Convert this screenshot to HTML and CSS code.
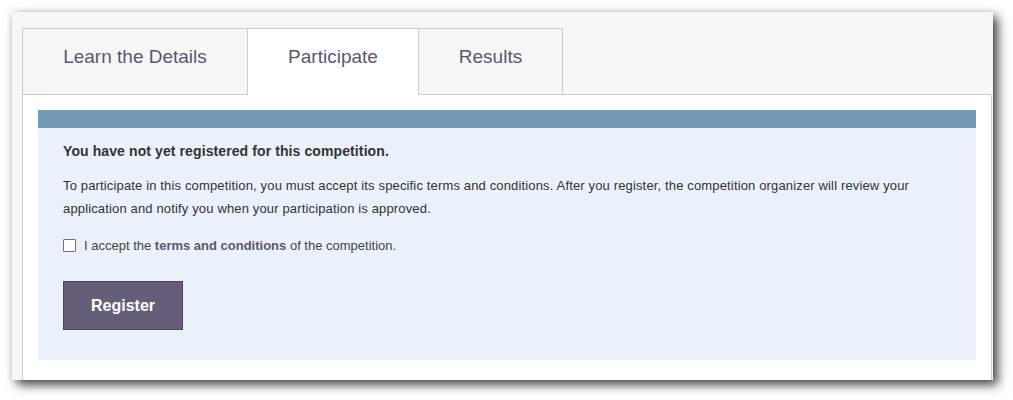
FILE: index.html
```html
<!DOCTYPE html>
<html lang="en">
<head>
<meta charset="utf-8">
<title>Participate</title>
<link rel="stylesheet" href="styles.css">
</head>
<body>
<div class="card">
  <div class="tabs">
    <div class="tab tab-details">Learn the Details</div>
    <div class="tab tab-active">Participate</div>
    <div class="tab tab-results">Results</div>
    <div class="tab-filler"></div>
  </div>
  <div class="panel">
    <div class="notice">
      <h2 class="notice-title">You have not yet registered for this competition.</h2>
      <p class="notice-text">To participate in this competition, you must accept its specific terms and conditions. After you register, the competition organizer will review your application and notify you when your participation is approved.</p>
      <label class="accept">
        <input type="checkbox" class="accept-box">
        <span>I accept the <a class="terms-link">terms and conditions</a> of the competition.</span>
      </label>
      <button class="register-btn" type="button">Register</button>
    </div>
  </div>
</div>
</body>
</html>
```
FILE: styles.css
```css
html, body {
  margin: 0;
  padding: 0;
  background: #ffffff;
}
body {
  font-family: "Liberation Sans", Arial, sans-serif;
  color: #333333;
  padding-bottom: 20px;
}
.card {
  margin: 12px 0 0 12px;
  width: 981px;
  height: 368px;
  box-sizing: border-box;
  padding: 16px 1px 0 10px;
  background: #f6f6f6;
  box-shadow: 5px 5px 10px rgba(0, 0, 0, 0.7), 0 0 8px rgba(0, 0, 0, 0.12);
  display: flex;
  flex-direction: column;
}
.tabs {
  display: flex;
  height: 67px;
  flex: none;
}
.tab {
  box-sizing: border-box;
  height: 67px;
  display: flex;
  align-items: center;
  justify-content: center;
  font-size: 19px;
  color: #5d566f;
  border-top: 1px solid #cccccc;
  border-bottom: 1px solid #cccccc;
  padding-bottom: 10px;
}
.tab-details {
  width: 226px;
  border-left: 1px solid #cccccc;
  border-right: 1px solid #cccccc;
}
.tab-active {
  width: 170px;
  background: #ffffff;
  border-bottom-color: #ffffff;
}
.tab-results {
  width: 145px;
  border-left: 1px solid #cccccc;
  border-right: 1px solid #cccccc;
}
.tab-filler {
  flex: 1;
  border-bottom: 1px solid #cccccc;
}
.panel {
  flex: 1;
  background: #ffffff;
  border-left: 1px solid #cccccc;
  border-right: 1px solid #cccccc;
  padding: 15px 15px 0 15px;
}
.notice {
  background: #eaf1fb;
  border-top: 18px solid #729ab7;
  padding: 14px 25px 30px;
  display: flex;
  flex-direction: column;
  align-items: flex-start;
}
.notice-title {
  margin: 0;
  font-size: 14px;
  line-height: 18px;
  font-weight: bold;
  letter-spacing: 0.1px;
  color: #333333;
}
.notice-text {
  margin: 14px 0 0;
  font-size: 13px;
  line-height: 23px;
  letter-spacing: 0.15px;
  color: #333333;
}
.accept {
  margin-top: 14px;
  display: flex;
  align-items: center;
  height: 23px;
  font-size: 13px;
  color: #444444;
}
.accept-box {
  appearance: none;
  -webkit-appearance: none;
  margin: 0 8px 0 0;
  width: 13px;
  height: 13px;
  box-sizing: border-box;
  border: 1px solid #707070;
  background: #ffffff;
  border-radius: 1px;
}
.terms-link {
  font-weight: bold;
  color: #5d566f;
}
.register-btn {
  margin-top: 24px;
  width: 120px;
  height: 49px;
  box-sizing: border-box;
  background: #665e78;
  border: 1px solid #4b455d;
  color: #ffffff;
  font-family: "Liberation Sans", Arial, sans-serif;
  font-size: 16px;
  font-weight: bold;
  padding: 0;
}
```
